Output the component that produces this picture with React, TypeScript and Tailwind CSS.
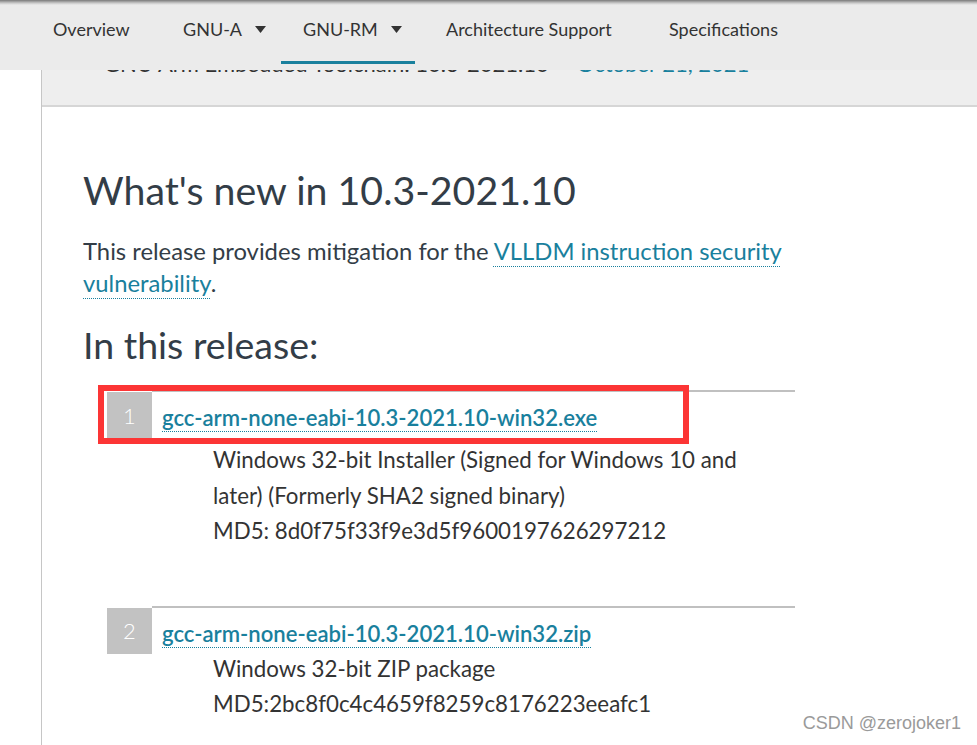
import React from 'react';

const navFont = { fontFamily: 'Lato, "Noto Sans", sans-serif' };

function Caret() {
  return (
    <svg width="11" height="7" viewBox="0 0 11 7" className="ml-[13px] mt-[1px]">
      <path d="M0 0 H11 L5.5 7 Z" fill="#333333" />
    </svg>
  );
}

function Item({
  n,
  file,
  lines,
  descTop,
}: {
  n: number;
  file: string;
  lines: string[];
  descTop: string;
}) {
  return (
    <div className="flex">
      <div className="mt-[2px] flex h-[46px] w-[45px] shrink-0 items-center justify-center bg-[#c2c2c2] text-[22px] font-light text-white">
        {n}
      </div>
      <div className="w-[643px] border-t-2 border-[#c0c0c0]">
        <div className="pl-[10px] pt-[12px] text-[22.1px] font-semibold leading-[28px]">
          <a className="text-[#19809d] underline decoration-dotted decoration-[#19809d] decoration-1 underline-offset-[5px]">
            {file}
          </a>
        </div>
        <div className={`${descTop} w-[606px] pl-[61px] text-[22.3px] leading-[35.5px] text-[#333333]`}>
          {lines.map((l) => (
            <div key={l}>{l}</div>
          ))}
        </div>
      </div>
    </div>
  );
}

export default function App() {
  return (
    <div
      className="relative min-h-[745px] overflow-hidden bg-white text-[#333333]"
      style={{ fontFamily: 'Lato, "Open Sans", sans-serif' }}
    >
      {/* top nav */}
      <div className="h-[70px] bg-[#ebebeb]">
        <div className="h-[5px] bg-[linear-gradient(#7a7a7a,#c8c8c8_60%,#ebebeb)]" />
        <div className="flex h-[65px] items-start pt-[12px] text-[18px] text-[#333333]" style={navFont}>
          <div className="ml-[53px] w-[130px] leading-[24px]">Overview</div>
          <div className="flex w-[98px] items-center leading-[24px]">
            GNU-A
            <Caret />
          </div>
          <div className="relative flex h-[46px] w-[165px] items-start px-[22px] leading-[24px]">
            <div className="flex items-center">
              GNU-RM
              <Caret />
            </div>
            <div className="absolute bottom-[-1px] left-0 h-[3px] w-[134px] bg-[#19809d]" />
          </div>
          <div className="w-[223px] leading-[24px]">Architecture Support</div>
          <div className="leading-[24px]">Specifications</div>
        </div>
      </div>

      {/* page */}
      <div className="ml-[41px] min-h-[675px] border-l border-[#c6c6c6]">
        <div className="h-[37px] overflow-hidden border-b-2 border-[#d6d6d6] bg-[#eeeeee]">
          <div className="-mt-[17px] flex pl-[62px] text-[22px] leading-[22px]">
            <span>GNU Arm Embedded Toolchain: 10.3-2021.10</span>
            <span className="ml-[28px] text-[#19809d]">October 21, 2021</span>
          </div>
        </div>

        <div className="pl-[41px]">
          <h1 className="mt-[59px] text-[39.3px] leading-[48px] text-[#333d47]">What's new in 10.3-2021.10</h1>
          <p className="mt-[21px] w-[720px] text-[23.8px] leading-[32px] text-[#333d47]">
            This release provides mitigation for the{' '}
            <a className="text-[#19809d] underline decoration-dotted decoration-1 underline-offset-[6px]">
              VLLDM instruction security vulnerability
            </a>
            .
          </p>
          <h2 className="mt-[24px] text-[37.5px] leading-[43px] text-[#333d47]">In this release:</h2>

          <div className="mt-[24px] ml-[24px]">
            <Item
              n={1}
              file="gcc-arm-none-eabi-10.3-2021.10-win32.exe"
              descTop="mt-[10px]"
              lines={[
                'Windows 32-bit Installer (Signed for Windows 10 and',
                'later) (Formerly SHA2 signed binary)',
                'MD5: 8d0f75f33f9e3d5f9600197626297212',
              ]}
            />
            <div className="h-[57px]" />
            <Item
              n={2}
              file="gcc-arm-none-eabi-10.3-2021.10-win32.zip"
              descTop="mt-[3px]"
              lines={['Windows 32-bit ZIP package', 'MD5:2bc8f0c4c4659f8259c8176223eeafc1']}
            />
          </div>
        </div>
      </div>

      {/* red annotation box */}
      <div className="absolute left-[98px] top-[385px] h-[59px] w-[591px] border-[6px] border-[#fc3535]" />

      {/* watermark */}
      <div
        className="absolute right-[16px] top-[710px] text-[18px] text-[#9a9a9a] [text-shadow:0_0_2px_#fff]"
        style={{ fontFamily: '"Liberation Sans", Arial, sans-serif' }}
      >
        CSDN @zerojoker1
      </div>
    </div>
  );
}
